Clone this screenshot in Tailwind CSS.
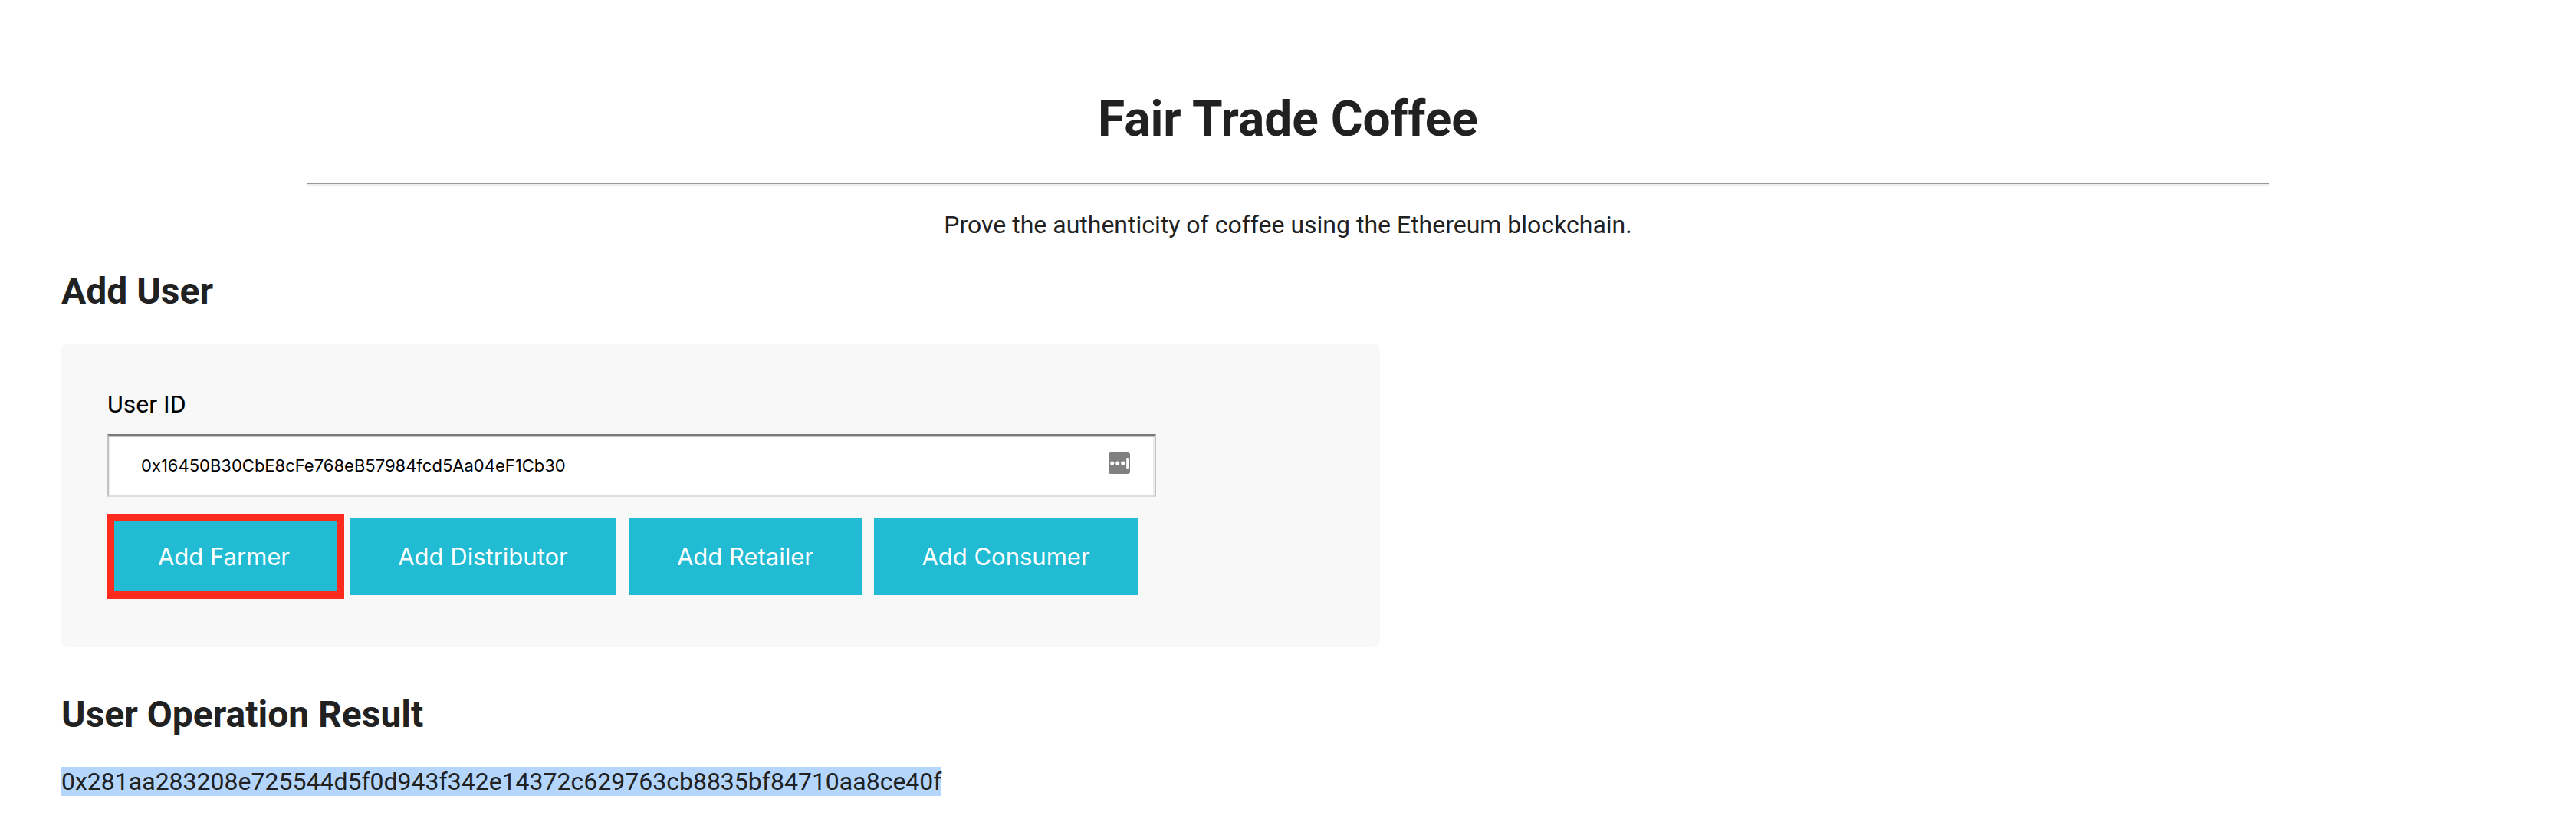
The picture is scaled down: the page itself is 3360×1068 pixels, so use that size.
<!DOCTYPE html>
<html lang="en">
<head>
<meta charset="utf-8">
<title>Fair Trade Coffee</title>
<script src="https://cdn.jsdelivr.net/npm/@tailwindcss/browser@4"></script>
</head>
<body class="bg-white font-['Roboto',sans-serif] text-[#212121]">
<main class="px-20 pt-[118px] pb-6">
  <header class="text-center">
    <h1 class="text-[64px] leading-[76px] font-bold">Fair Trade Coffee</h1>
    <hr class="mx-auto mt-11 h-1 w-4/5 border-t-2 border-b-2 border-t-[#9a9a9a] border-b-[#eeeeee]">
    <p class="mt-8 text-[32px] leading-[38px]">Prove the authenticity of coffee using the Ethereum blockchain.</p>
  </header>

  <section>
    <h2 class="mt-10 text-[48px] leading-[56px] font-bold">Add User</h2>
    <form class="mt-10 max-w-[1720px] rounded-lg bg-[#f8f8f8] px-[60px] pt-[60px] pb-[68px]">
      <label for="user-id" class="block text-[32px] leading-[38px] text-black">User ID</label>
      <div class="relative mt-5 max-w-[1368px]">
        <input id="user-id" type="text" value="0x16450B30CbE8cFe768eB57984fcd5Aa04eF1Cb30" class="block h-[82px] w-full border-2 border-t-[#7b7b7b] border-r-[#c3c3c3] border-b-[#dddddd] border-l-[#c3c3c3] bg-white pr-20 pl-[42px] font-['Inter',sans-serif] text-[22px] text-black shadow-[inset_0_2px_0_#c3c3c3,inset_2px_0_0_#ededed,inset_-2px_0_0_#ededed] outline-none">
        <svg class="absolute top-6 right-[34px] size-7" viewBox="0 0 28 28" aria-hidden="true">
          <rect width="28" height="28" rx="3" fill="#808080"/>
          <circle cx="4.7" cy="14" r="2.5" fill="#fff"/>
          <circle cx="11.7" cy="14" r="2.5" fill="#fff"/>
          <circle cx="18.7" cy="14" r="2.5" fill="#fff"/>
          <rect x="23.2" y="7" width="2.8" height="14" rx="1.2" fill="#fff"/>
        </svg>
      </div>
      <div class="mt-7 ml-1 flex flex-wrap gap-4 font-['Inter',sans-serif] text-[31px] text-white">
        <div class="relative">
          <button type="button" class="h-[100px] w-[296px] bg-[#21bbd3]">Add Farmer</button>
          <span class="pointer-events-none absolute -top-[6px] -right-[9px] -bottom-[5px] -left-[5px] border-10 border-[#fd2b1d]"></span>
        </div>
        <button type="button" class="h-[100px] w-[348px] bg-[#21bbd3]">Add Distributor</button>
        <button type="button" class="h-[100px] w-[304px] bg-[#21bbd3]">Add Retailer</button>
        <button type="button" class="h-[100px] w-[344px] bg-[#21bbd3]">Add Consumer</button>
      </div>
    </form>
  </section>

  <section>
    <h2 class="mt-[60px] text-[48px] leading-[56px] font-bold">User Operation Result</h2>
    <p class="mt-10 w-fit bg-[#b4d6fd] text-[32px] leading-[38px]">0x281aa283208e725544d5f0d943f342e14372c629763cb8835bf84710aa8ce40f</p>
  </section>
</main>
</body>
</html>
